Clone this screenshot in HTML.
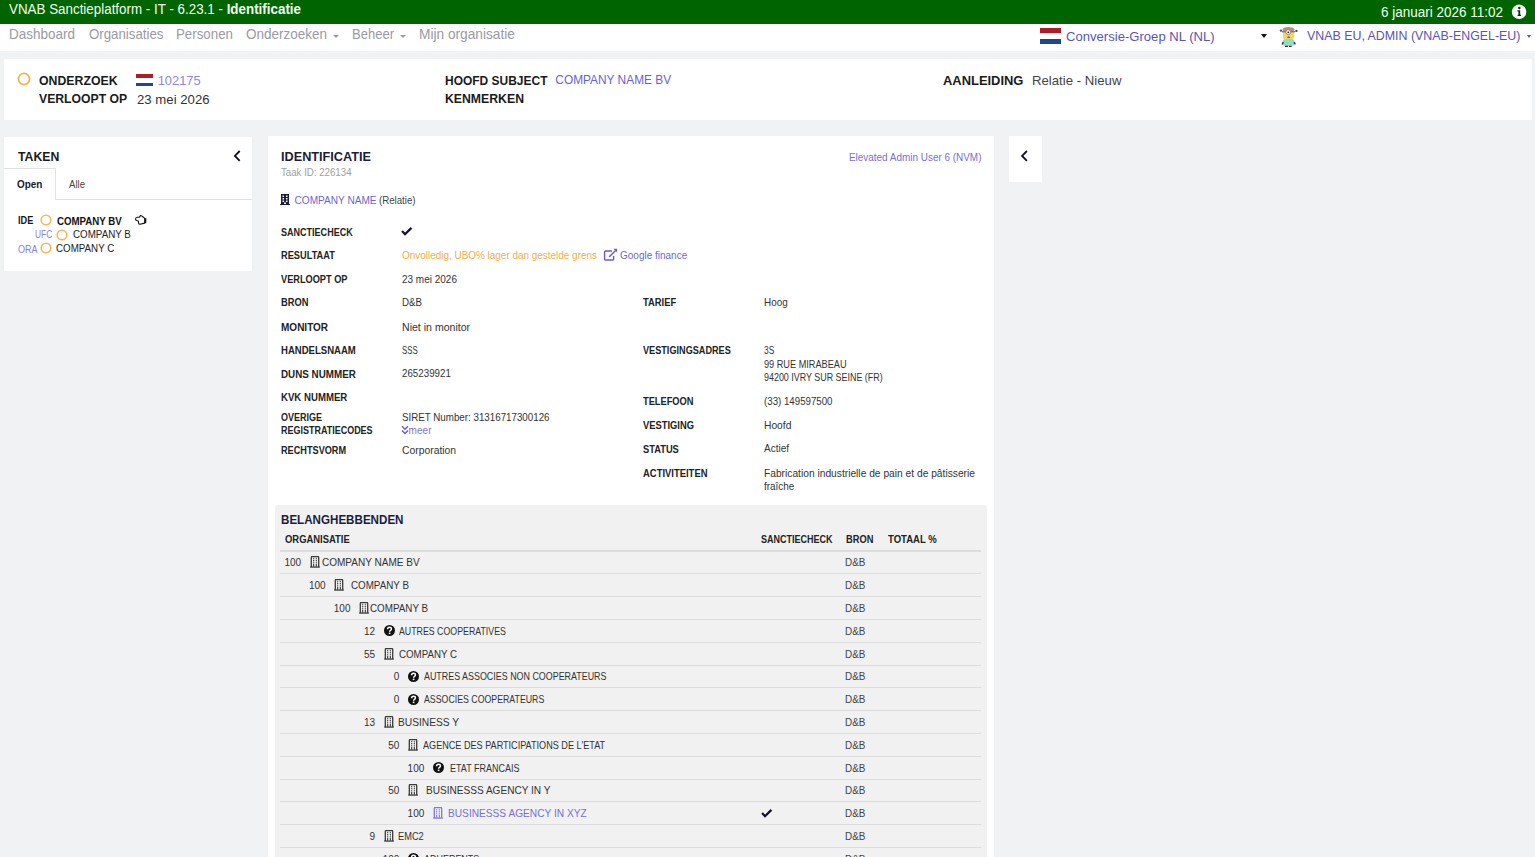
<!DOCTYPE html>
<html><head><meta charset="utf-8"><style>
html,body{margin:0;padding:0;width:1535px;height:857px;overflow:hidden;background:#f0f2f4;font-family:"Liberation Sans",sans-serif}
.t{position:absolute;white-space:nowrap}
.r{position:absolute}
</style></head><body>
<div class="r" style="left:0px;top:0px;width:1535px;height:24px;background:#006400;"></div>
<div class="t" style="left:9.0px;top:2.35px;font-size:14px;line-height:14px;font-weight:400;color:#f2fff2;transform:scaleX(0.9558);transform-origin:0 0;">VNAB Sanctieplatform - IT - 6.23.1 - <b>Identificatie</b></div>
<div class="t" style="left:1380.5px;top:5.05px;font-size:14px;line-height:14px;font-weight:400;color:#f2fff2;transform:scaleX(0.9635);transform-origin:0 0;">6 januari 2026 11:02</div>
<svg class="r" style="left:1511px;top:4px" width="16" height="16" viewBox="0 0 16 16"><circle cx="8.1" cy="7.8" r="7.25" fill="#fdfffd"/><circle cx="8.3" cy="4.1" r="1.25" fill="#0d2a0d"/><path d="M6.4 6.2 H9.2 V10.8 H10 V12 H6.6 V10.8 H7.4 V7.4 H6.4 Z" fill="#0d2a0d"/></svg>
<div class="r" style="left:0px;top:24px;width:1535px;height:27px;background:#fff;"></div>
<div class="t" style="left:9.3px;top:28.13px;font-size:13.9px;line-height:13.9px;font-weight:400;color:#9a9aa2;transform:scaleX(0.9706);transform-origin:0 0;">Dashboard</div>
<div class="t" style="left:88.5px;top:28.13px;font-size:13.9px;line-height:13.9px;font-weight:400;color:#9a9aa2;transform:scaleX(0.9547);transform-origin:0 0;">Organisaties</div>
<div class="t" style="left:176.0px;top:28.13px;font-size:13.9px;line-height:13.9px;font-weight:400;color:#9a9aa2;transform:scaleX(0.9579);transform-origin:0 0;">Personen</div>
<div class="t" style="left:246.0px;top:28.13px;font-size:13.9px;line-height:13.9px;font-weight:400;color:#9a9aa2;transform:scaleX(0.9706);transform-origin:0 0;">Onderzoeken</div>
<div class="t" style="left:351.5px;top:28.13px;font-size:13.9px;line-height:13.9px;font-weight:400;color:#9a9aa2;transform:scaleX(0.9370);transform-origin:0 0;">Beheer</div>
<div class="t" style="left:418.5px;top:28.13px;font-size:13.9px;line-height:13.9px;font-weight:400;color:#9a9aa2;transform:scaleX(0.9862);transform-origin:0 0;">Mijn organisatie</div>
<div class="r" style="left:332.6px;top:35px;width:0;height:0;border-left:3px solid transparent;border-right:3px solid transparent;border-top:3px solid #9a9aa2"></div>
<div class="r" style="left:399.6px;top:35px;width:0;height:0;border-left:3px solid transparent;border-right:3px solid transparent;border-top:3px solid #9a9aa2"></div>
<div class="r" style="left:1040px;top:28px;width:21px;height:16px;background:linear-gradient(#ae1c28 0 5px,#fff 5px 11px,#21468b 11px 16px)"></div>
<div class="t" style="left:1066.0px;top:29.59px;font-size:13.6px;line-height:13.6px;font-weight:400;color:#5a55b0;transform:scaleX(0.9629);transform-origin:0 0;">Conversie-Groep NL (NL)</div>
<div class="r" style="left:1261px;top:34px;width:0;height:0;border-left:3.5px solid transparent;border-right:3.5px solid transparent;border-top:4px solid #111"></div>
<svg class="r" style="left:1275px;top:24px" width="30" height="26" viewBox="0 0 30 26">
<rect x="7.8" y="5" width="11.4" height="11" rx="4" fill="#efd66a"/>
<ellipse cx="13.5" cy="5.6" rx="6" ry="2.6" fill="#b8907c"/>
<circle cx="6" cy="6.6" r="1.2" fill="#554"/><circle cx="21.4" cy="6.9" r="1.2" fill="#554"/>
<rect x="7" y="7" width="13" height="1.4" fill="#8a7a60"/>
<circle cx="13.3" cy="8.2" r="2.5" fill="#f4f2ec" stroke="#8a7a60" stroke-width="0.8"/>
<circle cx="13.3" cy="8.3" r="0.9" fill="#222"/>
<ellipse cx="13.6" cy="13.2" rx="1.5" ry="0.6" fill="#5a4a1a"/>
<rect x="7.8" y="15" width="11.4" height="7" rx="2.5" fill="#93dcc2"/>
<path d="M8.2 18 L7.2 20.6 M19.2 18 L20.2 20.6" stroke="#1d3a30" stroke-width="1.4"/>
<rect x="10" y="21.8" width="3" height="1.2" fill="#1d3a30"/><rect x="14" y="21.8" width="2.6" height="1.2" fill="#1d3a30"/>
</svg>
<div class="t" style="left:1307.0px;top:28.90px;font-size:13px;line-height:13px;font-weight:400;color:#5a55b0;transform:scaleX(0.9530);transform-origin:0 0;">VNAB EU, ADMIN (VNAB-ENGEL-EU)</div>
<div class="r" style="left:1527px;top:35px;width:0;height:0;border-left:2.5px solid transparent;border-right:2.5px solid transparent;border-top:3px solid #5a55b0"></div>
<div class="r" style="left:4px;top:59px;width:1528px;height:61px;background:#fff;"></div>
<svg class="r" style="left:15.5px;top:71.4px" width="16" height="16" viewBox="0 0 16 16"><circle cx="8" cy="8" r="5.6" fill="none" stroke="#efb652" stroke-width="1.8"/></svg>
<div class="t" style="left:39.4px;top:74.66px;font-size:12.8px;line-height:12.8px;font-weight:700;color:#1a1a1a;transform:scaleX(0.9611);transform-origin:0 0;">ONDERZOEK</div>
<div class="t" style="left:39.4px;top:93.06px;font-size:12.8px;line-height:12.8px;font-weight:700;color:#1a1a1a;transform:scaleX(0.9539);transform-origin:0 0;">VERLOOPT OP</div>
<div class="r" style="left:136px;top:73.5px;width:17px;height:12.7px;background:linear-gradient(#ae1c28 0 4.2px,#fff 4.2px 8.5px,#21468b 8.5px)"></div>
<div class="t" style="left:157.7px;top:74.58px;font-size:12.9px;line-height:12.9px;font-weight:400;color:#8f86dc;">102175</div>
<div class="t" style="left:137.0px;top:92.73px;font-size:13.2px;line-height:13.2px;font-weight:400;color:#333;">23 mei 2026</div>
<div class="t" style="left:445.2px;top:74.56px;font-size:12.8px;line-height:12.8px;font-weight:700;color:#1a1a1a;transform:scaleX(0.9359);transform-origin:0 0;">HOOFD SUBJECT</div>
<div class="t" style="left:555.3px;top:75.33px;font-size:11.9px;line-height:11.9px;font-weight:400;color:#6a5fd0;">COMPANY NAME BV</div>
<div class="t" style="left:445.0px;top:93.06px;font-size:12.8px;line-height:12.8px;font-weight:700;color:#1a1a1a;transform:scaleX(0.9576);transform-origin:0 0;">KENMERKEN</div>
<div class="t" style="left:942.6px;top:74.66px;font-size:12.8px;line-height:12.8px;font-weight:700;color:#1a1a1a;transform:scaleX(1.0095);transform-origin:0 0;">AANLEIDING</div>
<div class="t" style="left:1032.0px;top:74.33px;font-size:13.2px;line-height:13.2px;font-weight:400;color:#444;">Relatie - Nieuw</div>
<div class="r" style="left:4px;top:137px;width:248px;height:134px;background:#fff;"></div>
<div class="t" style="left:17.7px;top:150.98px;font-size:12.9px;line-height:12.9px;font-weight:700;color:#1a1a1a;transform:scaleX(0.9500);transform-origin:0 0;">TAKEN</div>
<svg class="r" style="left:232px;top:149px" width="10" height="14" viewBox="0 0 10 14"><path d="M7.7 2 L2.9 6.9 L7.7 11.8" fill="none" stroke="#0e0e22" stroke-width="1.8"/></svg>
<div class="r" style="left:4px;top:199px;width:248px;height:1px;background:#e2e2e2;"></div>
<div class="r" style="left:4px;top:168px;width:51px;height:31px;border-top:1px solid #e2e2e2;border-right:1px solid #e2e2e2;background:#fff"></div>
<div class="r" style="left:4px;top:199px;width:51px;height:1px;background:#fff;"></div>
<div class="t" style="left:17.3px;top:179.13px;font-size:10.6px;line-height:10.6px;font-weight:700;color:#1a1a2a;transform:scaleX(0.9376);transform-origin:0 0;">Open</div>
<div class="t" style="left:69.0px;top:179.13px;font-size:10.6px;line-height:10.6px;font-weight:400;color:#444;transform:scaleX(0.9052);transform-origin:0 0;">Alle</div>
<div class="t" style="left:17.9px;top:215.98px;font-size:10.3px;line-height:10.3px;font-weight:700;color:#1a1a1a;transform:scaleX(0.8911);transform-origin:0 0;">IDE</div>
<svg class="r" style="left:38px;top:212px" width="16" height="16" viewBox="0 0 16 16"><circle cx="8" cy="8" r="4.80" fill="none" stroke="#f0b85a" stroke-width="1.6"/></svg>
<div class="t" style="left:57.4px;top:216.97px;font-size:10.2px;line-height:10.2px;font-weight:700;color:#111;transform:scaleX(0.9516);transform-origin:0 0;">COMPANY BV</div>
<svg class="r" style="left:130px;top:210px" width="20" height="20" viewBox="0 0 20 20"><path d="M5.6 9.1 Q5.6 7.4 7.1 7.3 L9.4 7.1 L10.4 5.6 Q11 5.2 12.2 6.3 L14.8 8.4 L14.8 13.1 L9.9 14.3 Q8.9 14.4 8.6 13.2 L8.3 11 L6.3 10.5 Q5.6 10.1 5.6 9.1 Z" fill="none" stroke="#111" stroke-width="1.1" stroke-linejoin="round"/><rect x="14.4" y="8.2" width="1.9" height="4.9" fill="#111"/></svg>
<div class="t" style="left:34.7px;top:230.15px;font-size:10.1px;line-height:10.1px;font-weight:400;color:#8a80d8;transform:scaleX(0.8286);transform-origin:0 0;">UFC</div>
<svg class="r" style="left:54.3px;top:226.7px" width="16" height="16" viewBox="0 0 16 16"><circle cx="8" cy="8" r="4.80" fill="none" stroke="#f0b85a" stroke-width="1.6"/></svg>
<div class="t" style="left:73.4px;top:229.67px;font-size:10.2px;line-height:10.2px;font-weight:400;color:#222;transform:scaleX(0.9607);transform-origin:0 0;">COMPANY B</div>
<div class="t" style="left:17.9px;top:244.55px;font-size:10.1px;line-height:10.1px;font-weight:400;color:#8a80d8;transform:scaleX(0.8955);transform-origin:0 0;">ORA</div>
<svg class="r" style="left:38px;top:240.3px" width="16" height="16" viewBox="0 0 16 16"><circle cx="8" cy="8" r="4.80" fill="none" stroke="#f0b85a" stroke-width="1.6"/></svg>
<div class="t" style="left:56.2px;top:243.67px;font-size:10.2px;line-height:10.2px;font-weight:400;color:#222;transform:scaleX(0.9584);transform-origin:0 0;">COMPANY C</div>
<div class="r" style="left:1009px;top:136px;width:33px;height:46px;background:#fff;"></div>
<svg class="r" style="left:1019px;top:149px" width="10" height="14" viewBox="0 0 10 14"><path d="M7.9 2 L3.1 6.9 L7.9 11.8" fill="none" stroke="#0e0e22" stroke-width="1.8"/></svg>
<div class="r" style="left:268px;top:136px;width:726px;height:721px;background:#fff;"></div>
<div class="t" style="left:281.0px;top:150.39px;font-size:13.6px;line-height:13.6px;font-weight:700;color:#1c1c3c;transform:scaleX(0.9331);transform-origin:0 0;">IDENTIFICATIE</div>
<div class="t" style="left:281.0px;top:167.87px;font-size:10.2px;line-height:10.2px;font-weight:400;color:#a0a0a0;transform:scaleX(0.9504);transform-origin:0 0;">Taak ID: 226134</div>
<div class="t" style="left:848.8px;top:153.47px;font-size:10.2px;line-height:10.2px;font-weight:400;color:#7a70cc;transform:scaleX(0.9747);transform-origin:0 0;">Elevated Admin User 6 (NVM)</div>
<svg class="r" style="left:280px;top:194px" width="10" height="11" viewBox="0 0 10 11"><rect x="1" y="0" width="8" height="10" fill="#1c1c3c"/><rect x="0" y="10" width="10" height="1" fill="#1c1c3c"/><g fill="#fff"><rect x="2.5" y="1.5" width="1.5" height="1.5"/><rect x="6" y="1.5" width="1.5" height="1.5"/><rect x="2.5" y="4" width="1.5" height="1.5"/><rect x="6" y="4" width="1.5" height="1.5"/><rect x="2.5" y="6.5" width="1.5" height="1.5"/><rect x="6" y="6.5" width="1.5" height="1.5"/><rect x="4" y="8.5" width="2" height="1.5"/></g></svg>
<div class="t" style="left:294.5px;top:195.95px;font-size:10.1px;line-height:10.1px;font-weight:400;color:#7066cc;">COMPANY NAME</div>
<div class="t" style="left:378.8px;top:195.87px;font-size:10.2px;line-height:10.2px;font-weight:400;color:#444;transform:scaleX(0.9495);transform-origin:0 0;">(Relatie)</div>
<div class="t" style="left:280.6px;top:227.84px;font-size:10.0px;line-height:10.0px;font-weight:700;color:#222;transform:scaleX(0.9025);transform-origin:0 0;">SANCTIECHECK</div>
<div class="t" style="left:280.6px;top:251.44px;font-size:10.0px;line-height:10.0px;font-weight:700;color:#222;transform:scaleX(0.9241);transform-origin:0 0;">RESULTAAT</div>
<div class="t" style="left:280.6px;top:274.74px;font-size:10.0px;line-height:10.0px;font-weight:700;color:#222;transform:scaleX(0.9206);transform-origin:0 0;">VERLOOPT OP</div>
<div class="t" style="left:401.5px;top:274.57px;font-size:10.2px;line-height:10.2px;font-weight:400;color:#333;transform:scaleX(0.9797);transform-origin:0 0;">23 mei 2026</div>
<div class="t" style="left:280.6px;top:298.13px;font-size:10.0px;line-height:10.0px;font-weight:700;color:#222;transform:scaleX(0.9340);transform-origin:0 0;">BRON</div>
<div class="t" style="left:401.5px;top:297.97px;font-size:10.2px;line-height:10.2px;font-weight:400;color:#333;transform:scaleX(0.9536);transform-origin:0 0;">D&amp;B</div>
<div class="t" style="left:280.6px;top:322.83px;font-size:10.0px;line-height:10.0px;font-weight:700;color:#222;transform:scaleX(1.0013);transform-origin:0 0;">MONITOR</div>
<div class="t" style="left:401.5px;top:322.67px;font-size:10.2px;line-height:10.2px;font-weight:400;color:#333;transform:scaleX(1.0371);transform-origin:0 0;">Niet in monitor</div>
<div class="t" style="left:280.6px;top:346.44px;font-size:10.0px;line-height:10.0px;font-weight:700;color:#222;transform:scaleX(0.9549);transform-origin:0 0;">HANDELSNAAM</div>
<div class="t" style="left:401.5px;top:346.27px;font-size:10.2px;line-height:10.2px;font-weight:400;color:#333;transform:scaleX(0.7643);transform-origin:0 0;">SSS</div>
<div class="t" style="left:280.6px;top:369.63px;font-size:10.0px;line-height:10.0px;font-weight:700;color:#222;transform:scaleX(0.9828);transform-origin:0 0;">DUNS NUMMER</div>
<div class="t" style="left:401.5px;top:369.47px;font-size:10.2px;line-height:10.2px;font-weight:400;color:#333;transform:scaleX(0.9578);transform-origin:0 0;">265239921</div>
<div class="t" style="left:280.6px;top:393.44px;font-size:10.0px;line-height:10.0px;font-weight:700;color:#222;transform:scaleX(0.9624);transform-origin:0 0;">KVK NUMMER</div>
<div class="t" style="left:280.6px;top:412.74px;font-size:10.0px;line-height:10.0px;font-weight:700;color:#222;transform:scaleX(0.8998);transform-origin:0 0;">OVERIGE</div>
<div class="t" style="left:401.5px;top:412.57px;font-size:10.2px;line-height:10.2px;font-weight:400;color:#333;transform:scaleX(0.9588);transform-origin:0 0;">SIRET Number: 31316717300126</div>
<div class="t" style="left:280.6px;top:426.44px;font-size:10.0px;line-height:10.0px;font-weight:700;color:#222;transform:scaleX(0.8976);transform-origin:0 0;">REGISTRATIECODES</div>
<div class="t" style="left:280.6px;top:446.13px;font-size:10.0px;line-height:10.0px;font-weight:700;color:#222;transform:scaleX(0.9154);transform-origin:0 0;">RECHTSVORM</div>
<div class="t" style="left:401.5px;top:445.97px;font-size:10.2px;line-height:10.2px;font-weight:400;color:#333;transform:scaleX(1.0170);transform-origin:0 0;">Corporation</div>
<svg class="r" style="left:401px;top:227px" width="12" height="9" viewBox="0 0 12 9"><path d="M1.1 4.1 L4 7.2 L10.4 0.9" fill="none" stroke="#10102c" stroke-width="2.2"/></svg>
<div class="t" style="left:401.5px;top:251.27px;font-size:10.2px;line-height:10.2px;font-weight:400;color:#f0ad4e;transform:scaleX(0.9753);transform-origin:0 0;">Onvolledig, UBO% lager dan gestelde grens</div>
<svg class="r" style="left:598px;top:244px" width="22" height="20" viewBox="0 0 22 20"><path d="M13.9 7 H7.4 Q6.6 7 6.6 7.8 V15.3 Q6.6 16 7.4 16 H14.8 Q15.6 16 15.6 15.3 V12" fill="none" stroke="#6a5ec4" stroke-width="1.45"/><path d="M11.2 12.9 L17.6 6.5" stroke="#6a5ec4" stroke-width="1.5"/><path d="M15.4 4.8 H19.1 V8.6 Z" fill="#6a5ec4"/></svg>
<div class="t" style="left:620.0px;top:251.27px;font-size:10.2px;line-height:10.2px;font-weight:400;color:#7068c8;transform:scaleX(0.9808);transform-origin:0 0;">Google finance</div>
<svg class="r" style="left:400.8px;top:425px" width="8" height="10" viewBox="0 0 8 10"><path d="M1 1.2 L4 4.2 L7 1.2 M1 5.5 L4 8.5 L7 5.5" fill="none" stroke="#6a5ec4" stroke-width="1.5"/></svg>
<div class="t" style="left:408.6px;top:426.19px;font-size:10.05px;line-height:10.05px;font-weight:400;color:#8078c8;">meer</div>
<div class="t" style="left:642.8px;top:298.33px;font-size:10.0px;line-height:10.0px;font-weight:700;color:#222;transform:scaleX(0.9359);transform-origin:0 0;">TARIEF</div>
<div class="t" style="left:764.3px;top:298.17px;font-size:10.2px;line-height:10.2px;font-weight:400;color:#333;transform:scaleX(0.9719);transform-origin:0 0;">Hoog</div>
<div class="t" style="left:642.8px;top:346.04px;font-size:10.0px;line-height:10.0px;font-weight:700;color:#222;transform:scaleX(0.9134);transform-origin:0 0;">VESTIGINGSADRES</div>
<div class="t" style="left:764.3px;top:345.87px;font-size:10.2px;line-height:10.2px;font-weight:400;color:#333;transform:scaleX(0.8255);transform-origin:0 0;">3S</div>
<div class="t" style="left:764.3px;top:359.67px;font-size:10.2px;line-height:10.2px;font-weight:400;color:#333;transform:scaleX(0.8995);transform-origin:0 0;">99 RUE MIRABEAU</div>
<div class="t" style="left:764.3px;top:373.47px;font-size:10.2px;line-height:10.2px;font-weight:400;color:#333;transform:scaleX(0.8756);transform-origin:0 0;">94200 IVRY SUR SEINE (FR)</div>
<div class="t" style="left:642.8px;top:397.24px;font-size:10.0px;line-height:10.0px;font-weight:700;color:#222;transform:scaleX(0.9276);transform-origin:0 0;">TELEFOON</div>
<div class="t" style="left:764.3px;top:397.07px;font-size:10.2px;line-height:10.2px;font-weight:400;color:#333;transform:scaleX(0.9524);transform-origin:0 0;">(33) 149597500</div>
<div class="t" style="left:642.8px;top:421.13px;font-size:10.0px;line-height:10.0px;font-weight:700;color:#222;transform:scaleX(0.9366);transform-origin:0 0;">VESTIGING</div>
<div class="t" style="left:764.3px;top:420.97px;font-size:10.2px;line-height:10.2px;font-weight:400;color:#333;transform:scaleX(1.0066);transform-origin:0 0;">Hoofd</div>
<div class="t" style="left:642.8px;top:444.54px;font-size:10.0px;line-height:10.0px;font-weight:700;color:#222;transform:scaleX(0.9295);transform-origin:0 0;">STATUS</div>
<div class="t" style="left:764.3px;top:444.37px;font-size:10.2px;line-height:10.2px;font-weight:400;color:#333;transform:scaleX(0.9800);transform-origin:0 0;">Actief</div>
<div class="t" style="left:642.8px;top:468.74px;font-size:10.0px;line-height:10.0px;font-weight:700;color:#222;transform:scaleX(0.9439);transform-origin:0 0;">ACTIVITEITEN</div>
<div class="t" style="left:764.3px;top:468.57px;font-size:10.2px;line-height:10.2px;font-weight:400;color:#333;transform:scaleX(1.0040);transform-origin:0 0;">Fabrication industrielle de pain et de pâtisserie</div>
<div class="t" style="left:764.3px;top:482.37px;font-size:10.2px;line-height:10.2px;font-weight:400;color:#333;transform:scaleX(0.9749);transform-origin:0 0;">fraîche</div>
<div class="r" style="left:275px;top:505px;width:712px;height:352px;background:#f1f1f1;border-radius:3px 3px 0 0"></div>
<div class="t" style="left:281.0px;top:514.20px;font-size:12.4px;line-height:12.4px;font-weight:700;color:#1c1c3c;transform:scaleX(0.9366);transform-origin:0 0;">BELANGHEBBENDEN</div>
<div class="t" style="left:284.5px;top:534.57px;font-size:10.2px;line-height:10.2px;font-weight:700;color:#222;transform:scaleX(0.9247);transform-origin:0 0;">ORGANISATIE</div>
<div class="t" style="left:760.8px;top:534.57px;font-size:10.2px;line-height:10.2px;font-weight:700;color:#222;transform:scaleX(0.8823);transform-origin:0 0;">SANCTIECHECK</div>
<div class="t" style="left:846.0px;top:534.57px;font-size:10.2px;line-height:10.2px;font-weight:700;color:#222;transform:scaleX(0.9123);transform-origin:0 0;">BRON</div>
<div class="t" style="left:887.9px;top:534.57px;font-size:10.2px;line-height:10.2px;font-weight:700;color:#222;transform:scaleX(0.9360);transform-origin:0 0;">TOTAAL %</div>
<div class="r" style="left:280px;top:550px;width:701px;height:2px;background:#dcdcdc;"></div>
<div class="r" style="left:280px;top:573px;width:701px;height:1px;background:#dcdcdc;"></div>
<div class="t" style="left:241.2px;width:60px;text-align:right;top:558.43px;font-size:10px;line-height:10px;color:#333">100</div>
<svg class="r" style="left:309.5px;top:556px" width="10" height="12" viewBox="0 0 10 12"><path d="M1.3 11 V1.4 Q1.3 0.65 2 0.65 H8 Q8.7 0.65 8.7 1.4 V11" fill="none" stroke="#3a3a3a" stroke-width="1.3"/><rect x="0.2" y="10.4" width="9.6" height="1.3" fill="#3a3a3a"/><g fill="#3a3a3a"><rect x="3.1" y="2.1" width="1.1" height="1.1"/><rect x="5.8" y="2.1" width="1.1" height="1.1"/><rect x="3.1" y="3.9" width="1.1" height="1.1"/><rect x="5.8" y="3.9" width="1.1" height="1.1"/><rect x="3.1" y="5.7" width="1.1" height="1.1"/><rect x="5.8" y="5.7" width="1.1" height="1.1"/><rect x="3.1" y="7.6" width="1.1" height="3"/><rect x="5.8" y="7.6" width="1.1" height="3"/></g></svg>
<div class="t" style="left:322.0px;top:558.27px;font-size:10.2px;line-height:10.2px;font-weight:400;color:#333;transform:scaleX(0.9831);transform-origin:0 0;">COMPANY NAME BV</div>
<div class="t" style="left:845.4px;top:558.27px;font-size:10.2px;line-height:10.2px;font-weight:400;color:#444;transform:scaleX(0.9726);transform-origin:0 0;">D&amp;B</div>
<div class="r" style="left:280px;top:596px;width:701px;height:1px;background:#dcdcdc;"></div>
<div class="t" style="left:265.6px;width:60px;text-align:right;top:581.43px;font-size:10px;line-height:10px;color:#333">100</div>
<svg class="r" style="left:334px;top:579px" width="10" height="12" viewBox="0 0 10 12"><path d="M1.3 11 V1.4 Q1.3 0.65 2 0.65 H8 Q8.7 0.65 8.7 1.4 V11" fill="none" stroke="#3a3a3a" stroke-width="1.3"/><rect x="0.2" y="10.4" width="9.6" height="1.3" fill="#3a3a3a"/><g fill="#3a3a3a"><rect x="3.1" y="2.1" width="1.1" height="1.1"/><rect x="5.8" y="2.1" width="1.1" height="1.1"/><rect x="3.1" y="3.9" width="1.1" height="1.1"/><rect x="5.8" y="3.9" width="1.1" height="1.1"/><rect x="3.1" y="5.7" width="1.1" height="1.1"/><rect x="5.8" y="5.7" width="1.1" height="1.1"/><rect x="3.1" y="7.6" width="1.1" height="3"/><rect x="5.8" y="7.6" width="1.1" height="3"/></g></svg>
<div class="t" style="left:351.0px;top:581.27px;font-size:10.2px;line-height:10.2px;font-weight:400;color:#333;transform:scaleX(0.9623);transform-origin:0 0;">COMPANY B</div>
<div class="t" style="left:845.4px;top:581.27px;font-size:10.2px;line-height:10.2px;font-weight:400;color:#444;transform:scaleX(0.9726);transform-origin:0 0;">D&amp;B</div>
<div class="r" style="left:280px;top:619px;width:701px;height:1px;background:#dcdcdc;"></div>
<div class="t" style="left:290.5px;width:60px;text-align:right;top:604.43px;font-size:10px;line-height:10px;color:#333">100</div>
<svg class="r" style="left:359px;top:602px" width="10" height="12" viewBox="0 0 10 12"><path d="M1.3 11 V1.4 Q1.3 0.65 2 0.65 H8 Q8.7 0.65 8.7 1.4 V11" fill="none" stroke="#3a3a3a" stroke-width="1.3"/><rect x="0.2" y="10.4" width="9.6" height="1.3" fill="#3a3a3a"/><g fill="#3a3a3a"><rect x="3.1" y="2.1" width="1.1" height="1.1"/><rect x="5.8" y="2.1" width="1.1" height="1.1"/><rect x="3.1" y="3.9" width="1.1" height="1.1"/><rect x="5.8" y="3.9" width="1.1" height="1.1"/><rect x="3.1" y="5.7" width="1.1" height="1.1"/><rect x="5.8" y="5.7" width="1.1" height="1.1"/><rect x="3.1" y="7.6" width="1.1" height="3"/><rect x="5.8" y="7.6" width="1.1" height="3"/></g></svg>
<div class="t" style="left:370.0px;top:604.27px;font-size:10.2px;line-height:10.2px;font-weight:400;color:#333;transform:scaleX(0.9657);transform-origin:0 0;">COMPANY B</div>
<div class="t" style="left:845.4px;top:604.27px;font-size:10.2px;line-height:10.2px;font-weight:400;color:#444;transform:scaleX(0.9726);transform-origin:0 0;">D&amp;B</div>
<div class="r" style="left:280px;top:642px;width:701px;height:1px;background:#dcdcdc;"></div>
<div class="t" style="left:315.0px;width:60px;text-align:right;top:627.43px;font-size:10px;line-height:10px;color:#333">12</div>
<svg class="r" style="left:383.5px;top:625px" width="11" height="11" viewBox="0 0 11 11"><circle cx="5.5" cy="5.5" r="5.5" fill="#111"/><path d="M3.6 4.2 Q3.6 2.3 5.5 2.3 Q7.4 2.3 7.4 4 Q7.4 5 6.2 5.6 Q5.6 5.9 5.6 6.8" fill="none" stroke="#fff" stroke-width="1.5"/><rect x="4.8" y="7.6" width="1.6" height="1.5" fill="#fff"/></svg>
<div class="t" style="left:399.4px;top:627.27px;font-size:10.2px;line-height:10.2px;font-weight:400;color:#333;transform:scaleX(0.8634);transform-origin:0 0;">AUTRES COOPERATIVES</div>
<div class="t" style="left:845.4px;top:627.27px;font-size:10.2px;line-height:10.2px;font-weight:400;color:#444;transform:scaleX(0.9726);transform-origin:0 0;">D&amp;B</div>
<div class="r" style="left:280px;top:665px;width:701px;height:1px;background:#dcdcdc;"></div>
<div class="t" style="left:315.0px;width:60px;text-align:right;top:650.43px;font-size:10px;line-height:10px;color:#333">55</div>
<svg class="r" style="left:383.5px;top:648px" width="10" height="12" viewBox="0 0 10 12"><path d="M1.3 11 V1.4 Q1.3 0.65 2 0.65 H8 Q8.7 0.65 8.7 1.4 V11" fill="none" stroke="#3a3a3a" stroke-width="1.3"/><rect x="0.2" y="10.4" width="9.6" height="1.3" fill="#3a3a3a"/><g fill="#3a3a3a"><rect x="3.1" y="2.1" width="1.1" height="1.1"/><rect x="5.8" y="2.1" width="1.1" height="1.1"/><rect x="3.1" y="3.9" width="1.1" height="1.1"/><rect x="5.8" y="3.9" width="1.1" height="1.1"/><rect x="3.1" y="5.7" width="1.1" height="1.1"/><rect x="5.8" y="5.7" width="1.1" height="1.1"/><rect x="3.1" y="7.6" width="1.1" height="3"/><rect x="5.8" y="7.6" width="1.1" height="3"/></g></svg>
<div class="t" style="left:399.4px;top:650.27px;font-size:10.2px;line-height:10.2px;font-weight:400;color:#333;transform:scaleX(0.9551);transform-origin:0 0;">COMPANY C</div>
<div class="t" style="left:845.4px;top:650.27px;font-size:10.2px;line-height:10.2px;font-weight:400;color:#444;transform:scaleX(0.9726);transform-origin:0 0;">D&amp;B</div>
<div class="r" style="left:280px;top:687px;width:701px;height:1px;background:#dcdcdc;"></div>
<div class="t" style="left:339.4px;width:60px;text-align:right;top:672.43px;font-size:10px;line-height:10px;color:#333">0</div>
<svg class="r" style="left:408px;top:671px" width="11" height="11" viewBox="0 0 11 11"><circle cx="5.5" cy="5.5" r="5.5" fill="#111"/><path d="M3.6 4.2 Q3.6 2.3 5.5 2.3 Q7.4 2.3 7.4 4 Q7.4 5 6.2 5.6 Q5.6 5.9 5.6 6.8" fill="none" stroke="#fff" stroke-width="1.5"/><rect x="4.8" y="7.6" width="1.6" height="1.5" fill="#fff"/></svg>
<div class="t" style="left:424.3px;top:672.27px;font-size:10.2px;line-height:10.2px;font-weight:400;color:#333;transform:scaleX(0.8744);transform-origin:0 0;">AUTRES ASSOCIES NON COOPERATEURS</div>
<div class="t" style="left:845.4px;top:672.27px;font-size:10.2px;line-height:10.2px;font-weight:400;color:#444;transform:scaleX(0.9726);transform-origin:0 0;">D&amp;B</div>
<div class="r" style="left:280px;top:710px;width:701px;height:1px;background:#dcdcdc;"></div>
<div class="t" style="left:339.4px;width:60px;text-align:right;top:695.43px;font-size:10px;line-height:10px;color:#333">0</div>
<svg class="r" style="left:408px;top:694px" width="11" height="11" viewBox="0 0 11 11"><circle cx="5.5" cy="5.5" r="5.5" fill="#111"/><path d="M3.6 4.2 Q3.6 2.3 5.5 2.3 Q7.4 2.3 7.4 4 Q7.4 5 6.2 5.6 Q5.6 5.9 5.6 6.8" fill="none" stroke="#fff" stroke-width="1.5"/><rect x="4.8" y="7.6" width="1.6" height="1.5" fill="#fff"/></svg>
<div class="t" style="left:424.3px;top:695.27px;font-size:10.2px;line-height:10.2px;font-weight:400;color:#333;transform:scaleX(0.8612);transform-origin:0 0;">ASSOCIES COOPERATEURS</div>
<div class="t" style="left:845.4px;top:695.27px;font-size:10.2px;line-height:10.2px;font-weight:400;color:#444;transform:scaleX(0.9726);transform-origin:0 0;">D&amp;B</div>
<div class="r" style="left:280px;top:733px;width:701px;height:1px;background:#dcdcdc;"></div>
<div class="t" style="left:315.0px;width:60px;text-align:right;top:718.43px;font-size:10px;line-height:10px;color:#333">13</div>
<svg class="r" style="left:383.5px;top:716px" width="10" height="12" viewBox="0 0 10 12"><path d="M1.3 11 V1.4 Q1.3 0.65 2 0.65 H8 Q8.7 0.65 8.7 1.4 V11" fill="none" stroke="#3a3a3a" stroke-width="1.3"/><rect x="0.2" y="10.4" width="9.6" height="1.3" fill="#3a3a3a"/><g fill="#3a3a3a"><rect x="3.1" y="2.1" width="1.1" height="1.1"/><rect x="5.8" y="2.1" width="1.1" height="1.1"/><rect x="3.1" y="3.9" width="1.1" height="1.1"/><rect x="5.8" y="3.9" width="1.1" height="1.1"/><rect x="3.1" y="5.7" width="1.1" height="1.1"/><rect x="5.8" y="5.7" width="1.1" height="1.1"/><rect x="3.1" y="7.6" width="1.1" height="3"/><rect x="5.8" y="7.6" width="1.1" height="3"/></g></svg>
<div class="t" style="left:398.0px;top:718.27px;font-size:10.2px;line-height:10.2px;font-weight:400;color:#333;transform:scaleX(1.0027);transform-origin:0 0;">BUSINESS Y</div>
<div class="t" style="left:845.4px;top:718.27px;font-size:10.2px;line-height:10.2px;font-weight:400;color:#444;transform:scaleX(0.9726);transform-origin:0 0;">D&amp;B</div>
<div class="r" style="left:280px;top:756px;width:701px;height:1px;background:#dcdcdc;"></div>
<div class="t" style="left:339.4px;width:60px;text-align:right;top:741.43px;font-size:10px;line-height:10px;color:#333">50</div>
<svg class="r" style="left:408px;top:739px" width="10" height="12" viewBox="0 0 10 12"><path d="M1.3 11 V1.4 Q1.3 0.65 2 0.65 H8 Q8.7 0.65 8.7 1.4 V11" fill="none" stroke="#3a3a3a" stroke-width="1.3"/><rect x="0.2" y="10.4" width="9.6" height="1.3" fill="#3a3a3a"/><g fill="#3a3a3a"><rect x="3.1" y="2.1" width="1.1" height="1.1"/><rect x="5.8" y="2.1" width="1.1" height="1.1"/><rect x="3.1" y="3.9" width="1.1" height="1.1"/><rect x="5.8" y="3.9" width="1.1" height="1.1"/><rect x="3.1" y="5.7" width="1.1" height="1.1"/><rect x="5.8" y="5.7" width="1.1" height="1.1"/><rect x="3.1" y="7.6" width="1.1" height="3"/><rect x="5.8" y="7.6" width="1.1" height="3"/></g></svg>
<div class="t" style="left:422.6px;top:741.27px;font-size:10.2px;line-height:10.2px;font-weight:400;color:#333;transform:scaleX(0.8929);transform-origin:0 0;">AGENCE DES PARTICIPATIONS DE L'ETAT</div>
<div class="t" style="left:845.4px;top:741.27px;font-size:10.2px;line-height:10.2px;font-weight:400;color:#444;transform:scaleX(0.9726);transform-origin:0 0;">D&amp;B</div>
<div class="r" style="left:280px;top:779px;width:701px;height:1px;background:#dcdcdc;"></div>
<div class="t" style="left:364.3px;width:60px;text-align:right;top:764.43px;font-size:10px;line-height:10px;color:#333">100</div>
<svg class="r" style="left:433px;top:762px" width="11" height="11" viewBox="0 0 11 11"><circle cx="5.5" cy="5.5" r="5.5" fill="#111"/><path d="M3.6 4.2 Q3.6 2.3 5.5 2.3 Q7.4 2.3 7.4 4 Q7.4 5 6.2 5.6 Q5.6 5.9 5.6 6.8" fill="none" stroke="#fff" stroke-width="1.5"/><rect x="4.8" y="7.6" width="1.6" height="1.5" fill="#fff"/></svg>
<div class="t" style="left:449.5px;top:764.27px;font-size:10.2px;line-height:10.2px;font-weight:400;color:#333;transform:scaleX(0.8822);transform-origin:0 0;">ETAT FRANCAIS</div>
<div class="t" style="left:845.4px;top:764.27px;font-size:10.2px;line-height:10.2px;font-weight:400;color:#444;transform:scaleX(0.9726);transform-origin:0 0;">D&amp;B</div>
<div class="r" style="left:280px;top:801px;width:701px;height:1px;background:#dcdcdc;"></div>
<div class="t" style="left:339.4px;width:60px;text-align:right;top:786.43px;font-size:10px;line-height:10px;color:#333">50</div>
<svg class="r" style="left:408px;top:784px" width="10" height="12" viewBox="0 0 10 12"><path d="M1.3 11 V1.4 Q1.3 0.65 2 0.65 H8 Q8.7 0.65 8.7 1.4 V11" fill="none" stroke="#3a3a3a" stroke-width="1.3"/><rect x="0.2" y="10.4" width="9.6" height="1.3" fill="#3a3a3a"/><g fill="#3a3a3a"><rect x="3.1" y="2.1" width="1.1" height="1.1"/><rect x="5.8" y="2.1" width="1.1" height="1.1"/><rect x="3.1" y="3.9" width="1.1" height="1.1"/><rect x="5.8" y="3.9" width="1.1" height="1.1"/><rect x="3.1" y="5.7" width="1.1" height="1.1"/><rect x="5.8" y="5.7" width="1.1" height="1.1"/><rect x="3.1" y="7.6" width="1.1" height="3"/><rect x="5.8" y="7.6" width="1.1" height="3"/></g></svg>
<div class="t" style="left:426.3px;top:786.27px;font-size:10.2px;line-height:10.2px;font-weight:400;color:#333;transform:scaleX(0.9886);transform-origin:0 0;">BUSINESSS AGENCY IN Y</div>
<div class="t" style="left:845.4px;top:786.27px;font-size:10.2px;line-height:10.2px;font-weight:400;color:#444;transform:scaleX(0.9726);transform-origin:0 0;">D&amp;B</div>
<div class="r" style="left:280px;top:824px;width:701px;height:1px;background:#dcdcdc;"></div>
<div class="t" style="left:364.3px;width:60px;text-align:right;top:809.43px;font-size:10px;line-height:10px;color:#333">100</div>
<svg class="r" style="left:433px;top:807px" width="10" height="12" viewBox="0 0 10 12"><path d="M1.3 11 V1.4 Q1.3 0.65 2 0.65 H8 Q8.7 0.65 8.7 1.4 V11" fill="none" stroke="#8078d4" stroke-width="1.3"/><rect x="0.2" y="10.4" width="9.6" height="1.3" fill="#8078d4"/><g fill="#8078d4"><rect x="3.1" y="2.1" width="1.1" height="1.1"/><rect x="5.8" y="2.1" width="1.1" height="1.1"/><rect x="3.1" y="3.9" width="1.1" height="1.1"/><rect x="5.8" y="3.9" width="1.1" height="1.1"/><rect x="3.1" y="5.7" width="1.1" height="1.1"/><rect x="5.8" y="5.7" width="1.1" height="1.1"/><rect x="3.1" y="7.6" width="1.1" height="3"/><rect x="5.8" y="7.6" width="1.1" height="3"/></g></svg>
<div class="t" style="left:448.2px;top:809.27px;font-size:10.2px;line-height:10.2px;font-weight:400;color:#7a70d2;transform:scaleX(0.9967);transform-origin:0 0;">BUSINESSS AGENCY IN XYZ</div>
<div class="t" style="left:845.4px;top:809.27px;font-size:10.2px;line-height:10.2px;font-weight:400;color:#444;transform:scaleX(0.9726);transform-origin:0 0;">D&amp;B</div>
<svg class="r" style="left:761px;top:809px" width="12" height="9" viewBox="0 0 12 9"><path d="M1.1 4.1 L4 7.2 L10.4 0.9" fill="none" stroke="#10102c" stroke-width="2.2"/></svg>
<div class="r" style="left:280px;top:847px;width:701px;height:1px;background:#dcdcdc;"></div>
<div class="t" style="left:315.0px;width:60px;text-align:right;top:832.43px;font-size:10px;line-height:10px;color:#333">9</div>
<svg class="r" style="left:383.5px;top:830px" width="10" height="12" viewBox="0 0 10 12"><path d="M1.3 11 V1.4 Q1.3 0.65 2 0.65 H8 Q8.7 0.65 8.7 1.4 V11" fill="none" stroke="#3a3a3a" stroke-width="1.3"/><rect x="0.2" y="10.4" width="9.6" height="1.3" fill="#3a3a3a"/><g fill="#3a3a3a"><rect x="3.1" y="2.1" width="1.1" height="1.1"/><rect x="5.8" y="2.1" width="1.1" height="1.1"/><rect x="3.1" y="3.9" width="1.1" height="1.1"/><rect x="5.8" y="3.9" width="1.1" height="1.1"/><rect x="3.1" y="5.7" width="1.1" height="1.1"/><rect x="5.8" y="5.7" width="1.1" height="1.1"/><rect x="3.1" y="7.6" width="1.1" height="3"/><rect x="5.8" y="7.6" width="1.1" height="3"/></g></svg>
<div class="t" style="left:398.0px;top:832.27px;font-size:10.2px;line-height:10.2px;font-weight:400;color:#333;transform:scaleX(0.9104);transform-origin:0 0;">EMC2</div>
<div class="t" style="left:845.4px;top:832.27px;font-size:10.2px;line-height:10.2px;font-weight:400;color:#444;transform:scaleX(0.9726);transform-origin:0 0;">D&amp;B</div>
<div class="r" style="left:280px;top:870px;width:701px;height:1px;background:#dcdcdc;"></div>
<div class="t" style="left:339.4px;width:60px;text-align:right;top:855.43px;font-size:10px;line-height:10px;color:#333">100</div>
<svg class="r" style="left:408px;top:853px" width="11" height="11" viewBox="0 0 11 11"><circle cx="5.5" cy="5.5" r="5.5" fill="#111"/><path d="M3.6 4.2 Q3.6 2.3 5.5 2.3 Q7.4 2.3 7.4 4 Q7.4 5 6.2 5.6 Q5.6 5.9 5.6 6.8" fill="none" stroke="#fff" stroke-width="1.5"/><rect x="4.8" y="7.6" width="1.6" height="1.5" fill="#fff"/></svg>
<div class="t" style="left:424.3px;top:855.27px;font-size:10.2px;line-height:10.2px;font-weight:400;color:#333;transform:scaleX(0.88);transform-origin:0 0;">ADHERENTS</div>
<div class="t" style="left:845.4px;top:855.27px;font-size:10.2px;line-height:10.2px;font-weight:400;color:#444;transform:scaleX(0.9726);transform-origin:0 0;">D&amp;B</div>
</body></html>
